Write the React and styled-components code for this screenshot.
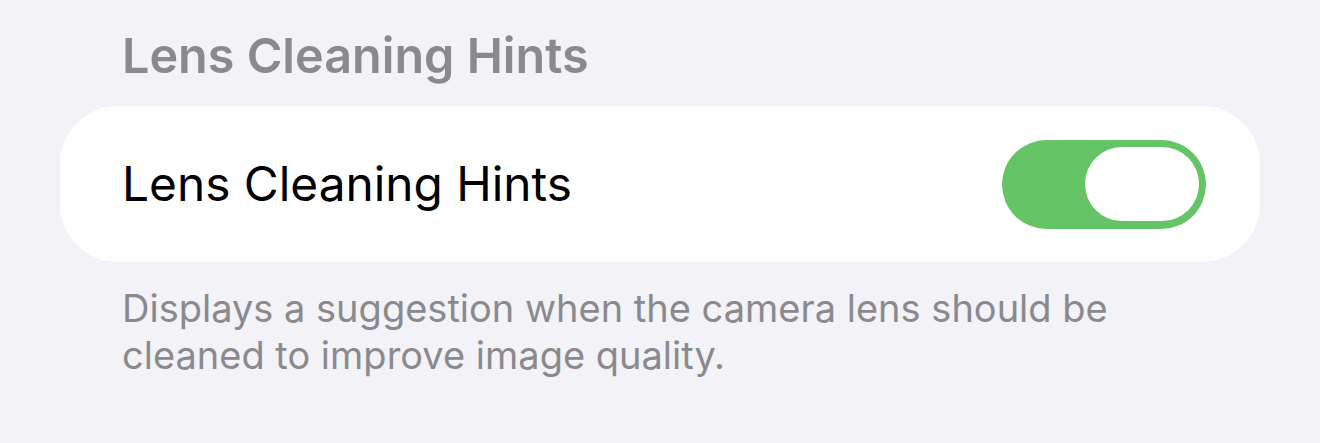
import React from "react";
import styled, { createGlobalStyle } from "styled-components";

const Global = createGlobalStyle`
  html, body {
    margin: 0;
    background: #f2f2f7;
  }
  body {
    font-family: Inter, "Liberation Sans", sans-serif;
    -webkit-font-smoothing: antialiased;
  }
`;

const Page = styled.main`
  width: 1320px;
  height: 443px;
  box-sizing: border-box;
  padding: 26px 60px 0 60px;
`;

const SectionTitle = styled.h2`
  margin: 0 0 20px 62px;
  font-size: 48.5px;
  line-height: 60px;
  font-weight: 600;
  color: #8a8a8e;
`;

const Card = styled.div`
  height: 156px;
  background: #ffffff;
  border-radius: 58px;
  display: flex;
  align-items: center;
  justify-content: space-between;
  padding: 0 54px 0 62px;
`;

const Label = styled.span`
  font-size: 47.8px;
  color: #000000;
`;

const Switch = styled.div`
  width: 204px;
  height: 89px;
  border-radius: 45px;
  background: ${(p) => (p.$on ? "#65c466" : "#e9e9ea")};
  display: flex;
  align-items: center;
  justify-content: ${(p) => (p.$on ? "flex-end" : "flex-start")};
  padding: 0 7px;
  box-sizing: border-box;
`;

const Knob = styled.div`
  width: 114px;
  height: 74px;
  border-radius: 37px;
  background: #ffffff;
`;

const Footer = styled.p`
  margin: 23px 0 0 62px;
  font-size: 38px;
  line-height: 47px;
  color: #8a8a8e;
  max-width: 1100px;
`;

const App = () => (
  <Page>
    <Global />
    <SectionTitle>Lens Cleaning Hints</SectionTitle>
    <Card>
      <Label>Lens Cleaning Hints</Label>
      <Switch $on>
        <Knob />
      </Switch>
    </Card>
    <Footer>
      Displays a suggestion when the camera lens should be
      <br />
      cleaned to improve image quality.
    </Footer>
  </Page>
);

export default App;
